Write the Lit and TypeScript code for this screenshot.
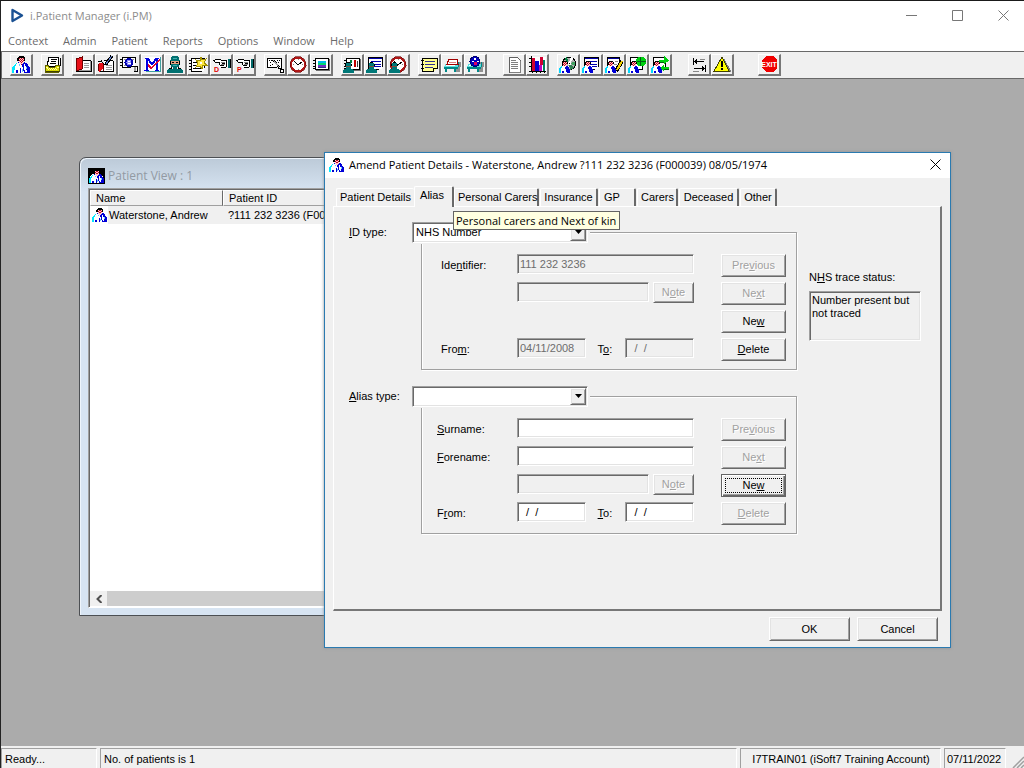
import { LitElement, html, svg, css, nothing } from 'lit';
import { customElement, property } from 'lit/decorators.js';

/* Filled pixel blocks: "x y w h|x y w h" */
const b = (fill: string, blocks: string) =>
  svg`<path fill=${fill} d=${blocks
    .split('|')
    .map((s) => {
      const [x, y, w, h] = s.split(' ');
      return `M${x} ${y}h${w}v${h}h-${w}z`;
    })
    .join('')}></path>`;

/* Polygon */
const p = (fill: string, points: string, stroke = 'none') =>
  svg`<polygon fill=${fill} stroke=${stroke} points=${points}></polygon>`;

/* Stroked path */
const l = (stroke: string, d: string, w = 1) =>
  svg`<path fill="none" stroke=${stroke} stroke-width=${w} d=${d}></path>`;

const doctor = svg`
  ${p('#fff', '4,8 8,7 10,9 12,7 16,8 19,13 19,18 1,18 1,13')}
  ${p('#00e8ff', '5,8 6,8 4,12 3,18 1,18 1,13')}
  ${p('#0000d8', '12,7 16,8 17,10 19,13 19,18 13,18 12,13 10,9')}
  ${p('#fff', '13,9 14,9 15,13 16,17 14,17 13,13')}
  ${b('#0000d8', '5 15 2 3|9 13 1 5|7 7 2 1')}
  ${b('#6cf', '8 9 1 2|11 14 1 3|15 12 1 2')}
  ${b('#000', '8 1 5 1|7 2 7 1|6 3 2 3|13 3 1 3')}
  ${b('#ffc8c8', '8 3 5 5|9 8 3 1')}
  ${b('#c00020', '8 3 1 1|10 3 1 1|12 3 1 1|9 4 1 1|11 4 1 1|8 5 1 1|10 5 1 1|12 5 1 1|9 6 1 1|11 6 1 1|10 7 1 1|10 9 1 1')}`;

const miniDoctor = svg`
  ${p('#fff', '3,11 11,11 12,18 2,18')}
  ${p('#00d8ff', '3,11 4,11 3,15 3,18 1,18 1,14')}
  ${p('#0000d8', '8,11 10,11 12,15 12,18 9,18 7,13')}
  ${b('#0000d8', '4 16 2 2')}
  ${b('#000', '5 6 4 1|4 7 1 3|9 7 1 2')}
  ${b('#ffc8c8', '5 7 4 4')}
  ${b('#c00020', '5 7 1 1|7 7 1 1|6 8 1 1|8 8 1 1|5 9 1 1|7 9 1 1|6 10 1 1')}`;

const miniSurgeon = svg`
  ${b('#007878', '4 8 5 2|3 10 7 1|4 12 5 2|2 14 9 1|1 15 11 3')}
  ${b('#805040', '4 11 5 1')}
  ${b('#000', '5 7 3 1|3 9 1 2|9 9 1 2')}`;

const clock = svg`
  <circle cx="10" cy="9.5" r="7" fill="#fff" stroke="#b01818" stroke-width="2"></circle>
  <circle cx="10" cy="9.5" r="8" fill="none" stroke="#600" stroke-width=".6"></circle>
  ${l('#000', 'M6 6L10 10L14 7')}
  ${b('#888', '10 4 1 1|10 14 1 1|5 9 1 1|14 9 1 1')}`;

const screen = svg`
  ${b('#000', '4 3 14 1|17 3 1 12|4 14 14 1|4 3 1 12')}${b('#fff', '5 4 12 10')}${b('#707070', '18 4 1 12|5 15 14 1')}
  ${b('#000', '2 5 2 1|2 8 2 1|2 11 2 1|2 13 2 1')}`;

const bed = svg`
  ${p('#909090', '15,7 19,7 18,17 12,17')}
  ${p('#60e0e0', '3,9 17,9 16,13 2,13')}
  ${b('#008888', '2 12 14 2|3 14 2 3|12 14 2 3|16 7 1 5')}
  ${b('#fff', '4 10 9 1')}`;

const card = svg`${b('#000', '3 2 15 1|3 2 1 13|17 2 1 10|3 14 11 1')}${b('#fff', '4 3 13 11')}${b('#0000b0', '4 3 13 1|6 6 10 1|6 9 10 1|8 11 8 1')}`;

const hand = svg`
  ${b('#fff', '3 5 6 2|8 5 8 7')}
  ${b('#000', '4 4 6 1|2 5 2 1|3 6 1 1|4 7 5 1|10 5 5 1|8 8 1 2|9 10 1 1|10 12 5 1|11 8 3 1|10 10 3 1|15 5 1 7')}
  ${b('#808080', '10 7 4 1|10 9 4 1')}
  ${b('#fff', '16 5 1 7')}${b('#006868', '17 4 2 9')}${b('#000', '19 4 1 9')}`;

const book = svg`
  ${b('#000', '9 5 9 1|18 6 1 11|3 16 16 1')}${b('#fff', '9 6 8 10')}
  ${b('#999', '11 8 5 1|11 10 5 1|11 12 5 1|17 6 1 10|5 15 12 1')}
  ${p('#e81018', '3,4 9,2 9,14 3,16')}${l('#700000', 'M3 4L9 2V14L3 16Z')}`;

const icons: Record<string, unknown> = {
  doctor,
  print: svg`
    ${p('#fff', '7,2 17,2 16,11 5,11', '#000')}
    ${b('#000', '9 4 6 1|9 6 5 1|8 8 6 1|18 3 1 8')}
    ${p('#d8d800', '3,10 6,10 7,12 13,12 14,10 18,10 17,17 3,17', '#606000')}
    ${b('#ffffa0', '4 12 2 1|15 12 2 1|5 13 1 1|7 13 1 1|9 13 1 1|11 13 1 1|13 13 1 1|6 14 1 1|8 14 1 1|10 14 1 1|12 14 1 1|14 14 1 1')}
    ${b('#404000', '4 16 13 1')}`,
  book,
  bookPen: svg`
    ${b('#000', '8 5 9 1|17 6 1 11|3 16 15 1')}${b('#fff', '8 6 9 10')}
    ${b('#999', '10 10 6 1|10 12 6 1|10 14 6 1')}
    ${p('#e81018', '2,9 7,7 7,14 3,17')}${b('#700000', '2 9 1 7|7 8 1 8')}
    ${b('#000', '2 6 4 1|5 5 1 2')}
    ${l('#000', 'M16 1L10 9', 3)}${l('#6080d0', 'M16 1L10 9')}${l('#000', 'M6 7L9 10L12 9')}`,
  find: svg`
    ${b('#000', '3 2 14 1|3 2 1 10|16 2 1 6|1 4 3 1|1 7 3 1|1 10 3 1|3 12 9 1')}
    ${b('#fff', '4 3 12 9')}${b('#888', '5 4 3 1|13 4 2 1|5 10 3 1')}
    <circle cx="10" cy="7.5" r="3.5" fill="#8a8aff" stroke="#0000b0" stroke-width="2"></circle>
    ${b('#fff', '9 6 2 1|9 8 3 1')}${l('#000', 'M12 11H18V16H15', 1)}${b('#999', '15 12 2 4')}`,
  chartM: svg`
    ${b('#fff', '3 2 15 14')}${b('#40a0a0', '18 2 1 15|4 16 15 1')}
    ${b('#0000e0', '4 3 2 13|14 3 2 13|2 15 5 1|13 15 4 1|3 3 3 1|14 3 3 1')}${l('#0000e0', 'M5 3L10 9L15 3', 2)}
    ${l('#e00030', 'M6 9L9 13L18 4', 1)}${l('#e00030', 'M6 10L9 14L18 5', 1)}`,
  surgeon: svg`
    ${b('#007070', '7 1 6 1|6 2 8 4|5 5 10 1|6 9 8 3|8 12 4 2|3 14 14 1|2 15 16 3')}
    ${b('#e0a080', '6 6 8 3')}${b('#000', '7 7 2 1|11 7 2 1|5 6 1 4|14 6 1 4|6 12 1 1|13 12 1 1|4 13 3 1|13 13 3 1')}
    ${b('#40b0b0', '8 3 4 1|8 10 4 1')}`,
  star: svg`
    ${b('#000', '3 3 14 1|3 3 1 13|16 3 1 10|3 16 11 1')}${b('#fff', '4 4 12 12')}${b('#000', '1 5 3 1|1 8 3 1|1 11 3 1|1 14 3 1|5 7 4 1|5 10 4 1|5 13 8 1')}
    ${p('#ffe840', '13,2 14,5 18,4 16,8 19,10 15,10 14,14 12,11 8,12 10,8 8,5 12,6', '#a09000')}${b('#fff', '12 7 2 2')}`,
  handD: svg`${hand}<text x="3" y="17" class="tag">D</text>`,
  handP: svg`${hand}<text x="3" y="17" class="tag">P</text>`,
  mail: svg`
    ${b('#000', '2 3 15 1|2 3 1 10|16 3 1 9|2 12 10 1')}${b('#fff', '3 4 13 8')}${b('#000', '4 5 1 1|6 5 1 1|5 7 1 1|12 5 1 1|14 5 1 1|5 10 1 1|7 9 1 1|13 7 1 1')}
    ${l('#000', 'M8 5L16 14', 2)}${l('#aaa', 'M8 5L14 12')}${b('#000', '13 12 4 2|15 14 4 4')}${b('#fff', '14 12 2 1|16 15 2 2')}`,
  clock,
  monitor: svg`${screen}${b('#00b8e8', '7 6 8 2')}${b('#00d870', '7 8 8 2')}${b('#7030c0', '7 10 8 2')}${b('#303080', '7 12 8 1')}`,
  monitorUser: svg`${screen}${b('#008040', '8 5 2 3')}${b('#c00000', '12 5 2 7')}${b('#404040', '15 6 1 6')}${miniSurgeon}`,
  cardUser: svg`${card}${miniSurgeon}`,
  clockUser: svg`${clock}${miniSurgeon}`,
  note: svg`${b('#000', '3 3 16 1|3 3 1 14|18 3 1 11|3 16 12 1')}${p('#ffff90', '4,4 18,4 18,13 15,16 4,16')}${b('#000', '2 5 3 1|2 9 3 1|2 13 3 1')}${b('#303090', '6 6 10 1|6 9 10 1|6 12 8 1')}${l('#000', 'M14 16V13H18')}`,
  bed: svg`${bed}${p('#fff', '7,4 15,4 16,9 5,9', '#a00000')}${b('#e08080', '7 7 7 1')}`,
  bedBall: svg`${bed}<circle cx="10" cy="6.5" r="5" fill="#0000c0" stroke="#000070"></circle>${b('#fff', '9 3 2 2|7 6 2 1|12 6 2 1')}${b('#e00060', '9 7 3 3')}`,
  page: svg`${p('#fff', '5,2 13,2 16,5 16,17 5,17', '#606060')}${b('#808080', '7 5 5 1|7 7 7 1|7 9 7 1|7 11 7 1|7 13 7 1|16 6 1 12|6 17 11 1')}`,
  bars: svg`
    ${b('#fff', '4 2 15 14')}${b('#000', '4 1 1 16|2 16 17 1|2 3 2 1|2 7 2 1|2 11 2 1')}
    ${b('#d00030', '5 3 3 13|13 2 3 8')}${b('#0000d0', '8 6 4 10')}${b('#c000c0', '12 10 3 6')}${b('#008060', '16 5 2 11')}
    ${b('#000', '5 17 1 1|9 17 1 1|13 17 1 1|17 17 1 1')}`,
  discDoctor: svg`
    <circle cx="11" cy="8.5" r="6.5" fill="#b0b0b0" stroke="#000"></circle>
    ${p('#008040', '11,8 6,4 9,2')}${p('#fff', '11,8 13,2 16,4')}${p('#40a060', '11,8 17,7 17,11')}${p('#308050', '11,8 12,15 16,13')}${b('#fff', '10 7 3 3')}${b('#000', '11 8 1 1')}${miniDoctor}`,
  cardDoctor: svg`${card}${miniDoctor}`,
  cardPen: svg`${b('#000', '3 2 13 12')}${b('#fff', '4 4 11 9')}${b('#0000a0', '4 3 11 1')}${b('#888', '6 6 3 1|11 6 3 1|10 9 3 1')}${l('#000', 'M18 6L12 16', 4)}${l('#f0d000', 'M18 6L13 15', 2)}${miniDoctor}`,
  globeDoctor: svg`${b('#000', '3 2 13 13')}${b('#fff', '4 3 11 11')}<circle cx="14" cy="6.5" r="5" fill="#00d010"></circle>${b('#006010', '10 6 9 1|13 2 1 9')}${miniDoctor}`,
  swapDoctor: svg`${b('#000', '3 2 13 13')}${b('#fff', '4 3 11 11')}${b('#0000a0', '6 6 4 1')}${p('#00d010', '9,5 14,5 14,1 19,6 14,9 14,7 9,7')}${p('#00d010', '19,12 14,12 14,9 10,13 14,17 14,14 19,14')}${b('#006010', '9 7 5 1|14 14 5 1')}${miniDoctor}`,
  tabs: svg`${b('#000', '4 3 1 7|5 6 10 1|6 5 1 3|7 4 1 5|16 10 1 7|5 13 11 1|14 12 1 3|13 11 1 5')}${b('#888', '11 4 5 1|4 16 6 1')}`,
  warn: svg`${p('#808080', '12,3 19,16 18,17 6,17')}${p('#ffff00', '10,2 17,16 2,16', '#404000')}${b('#000', '9 6 2 6|9 13 2 2')}`,
  exit: svg`${p('#f00000', '7,1 14,1 18,5 18,13 14,17 7,17 3,13 3,5')}<text x="10" y="12" class="exit" text-anchor="middle">EXIT</text>`,
};

const toolbar: [string, string][][] = [
  [['doctor', 'Patient']],
  [['print', 'Print']],
  [['book', 'Referral'], ['bookPen', 'Amend referral'], ['find', 'Find'], ['chartM', 'Maintain'], ['surgeon', 'Theatre'], ['star', 'New'], ['handD', 'Discharge'], ['handP', 'Pending']],
  [['mail', 'Letters'], ['clock', 'Appointments'], ['monitor', 'Clinics']],
  [['monitorUser', 'Staff clinics'], ['cardUser', 'Staff card'], ['clockUser', 'Staff time']],
  [['note', 'Notes'], ['bed', 'Beds'], ['bedBall', 'Ward']],
  [['page', 'Document'], ['bars', 'Statistics']],
  [['discDoctor', 'Trace'], ['cardDoctor', 'Patient card'], ['cardPen', 'Edit card'], ['globeDoctor', 'Demographics'], ['swapDoctor', 'Synchronise']],
  [['tabs', 'Switch'], ['warn', 'Alerts']],
  [['exit', 'Exit']],
];

@customElement('pm-icon')
export class PmIcon extends LitElement {
  @property() name = 'doctor';
  static styles = css`
    :host { display: block; width: 20px; height: 19px; flex: none; }
    svg { display: block; width: 100%; height: 100%; shape-rendering: crispEdges; }
    .tag { font: bold 7px 'Liberation Sans', Arial, sans-serif; fill: #e00000; }
    .exit { font: bold 7px 'Liberation Sans', Arial, sans-serif; fill: #fff; }
  `;
  render() {
    return html`<svg viewBox="0 0 20 19" aria-hidden="true">${icons[this.name] ?? nothing}</svg>`;
  }
}

/* Caption with an underlined access key: "Pre_vious" */
const key = (text: string) => {
  const i = text.indexOf('_');
  return i < 0 ? text : html`${text.slice(0, i)}<u>${text[i + 1]}</u>${text.slice(i + 2)}`;
};

@customElement('app-root')
export class AppRoot extends LitElement {
  static styles = css`
    :host {
      display: flex; flex-direction: column; height: 100vh; box-sizing: border-box; overflow: hidden;
      border-top: 1px solid #1a1a1a; border-left: 1px solid #222; background: #f0f0f0; color: #000;
      font: 11px/13px 'Liberation Sans', Arial, sans-serif;
    }
    * { box-sizing: border-box; }
    button, input, select, textarea { font: inherit; color: inherit; margin: 0; border-radius: 0; }
    u { text-underline-offset: 1px; }
    .ui { font-family: 'Open Sans', 'Noto Sans', sans-serif; font-size: 11px; line-height: 16px; }

    .titlebar { display: flex; align-items: center; height: 29px; background: #fff; color: #8c8c8c; padding-left: 9px; gap: 5px; overflow: hidden; }
    .titlebar h1 { flex: 1; font-size: inherit; font-weight: 400; margin: 0; }
    .winbtns { display: flex; margin-right: -2px; }
    .winbtn { width: 46px; height: 29px; padding: 0; border: 0; background: none; display: grid; place-items: center; color: #777; }
    .menu { display: flex; background: #fff; height: 21px; color: #6b6b6b; padding-left: 7px; gap: 15px; }
    .menu a { color: inherit; text-decoration: none; line-height: 21px; }

    .toolbar { display: flex; gap: 8px; height: 28px; padding: 2px 8px; border: 1px solid #696969; border-width: 1px 0 1px 1px; background: #f0f0f0; }
    .tools { display: flex; }
    .tools.wide { margin-left: 8px; }
    .tools.last { margin-left: 16px; }
    .tool { width: 23px; height: 22px; padding: 0; background: #f0f0f0; border: solid; border-width: 1px 2px 2px 1px; border-color: #fff #777 #777 #fff; overflow: hidden; }

    .desk { position: relative; flex: 1; min-height: 0; background: #ababab; overflow: hidden; }

    .child { position: absolute; left: 78px; top: 78px; width: 500px; height: 459px; display: flex; flex-direction: column;
      border: 1px solid #4c4f53; border-radius: 7px 7px 0 0; padding: 0 8px 7px; box-shadow: inset 1px 1px #eef5fc;
      background: linear-gradient(#bccad8, #d7e4f2 34px); }
    .childcap { display: flex; align-items: center; gap: 3px; height: 30px; padding-top: 6px; color: #929aa3; font-size: 12px; }
    .sq { background: #000; width: 17px; height: 16px; }
    .sq pm-icon, .cell pm-icon { width: 17px; height: 16px; }
    .list { flex: 1; display: flex; flex-direction: column; background: #fff; border: 1px solid; border-color: #a0a0a0 #fff #fff #a0a0a0; box-shadow: inset 1px 1px #696969; padding: 1px 0 1px 1px; }
    table { border-collapse: separate; border-spacing: 0; table-layout: fixed; width: 100%; text-align: left; }
    th, td { font-weight: 400; padding: 0 0 0 5px; white-space: nowrap; }
    th { height: 16px; background: #f0f0f0; border: 1px solid; border-color: #fff #696969 #a0a0a0 #fff; }
    th:first-child { width: 133px; }
    td { background: #f0f0f0; height: 18px; }
    td:first-child { padding: 0; background: linear-gradient(90deg, #fff 18px, #f0f0f0 18px); }
    .cell { display: flex; align-items: center; height: 17px; gap: 1px; padding-left: 1px; }
    .grow { flex: 1; }
    .hscroll { display: flex; height: 15px; background: #cdcdcd; }
    .hscroll button { width: 17px; border: 0; padding: 0; background: #f0f0f0; display: grid; place-items: center; }

    .dialog { position: absolute; left: 323px; top: 73px; width: 627px; height: 496px; display: flex; flex-direction: column;
      background: #f0f0f0; border: 1px solid #2a7ab0; box-shadow: 0 0 3px #8f9499; }
    .cap { display: flex; align-items: center; height: 25px; background: #fff; padding: 0 0 2px 3px; gap: 4px; }
    .cap pm-icon { width: 17px; height: 16px; }
    .cap h2 { flex: 1; margin: 0; font-size: inherit; font-weight: 400; }
    .cap button { width: 30px; height: 23px; border: 0; background: none; padding: 0; display: grid; place-items: center; }
    .body { flex: 1; display: flex; flex-direction: column; padding: 8px 8px 6px; }
    .tabs { display: flex; align-items: flex-end; padding-left: 3px; height: 20px; }
    .tab { height: 18px; padding: 0 3px; margin-right: 1px; background: none; border: solid; border-width: 1px 2px 0 1px; border-color: #fff #696969 #fff #fff; border-radius: 2px 2px 0 0; white-space: nowrap; text-align: center; }
    .tab.on { height: 21px; margin-bottom: -1px; margin-right: 0; padding: 0 6px 3px 3px; background: #f0f0f0; position: relative; }
    .tab.before { border-right: 0; margin-right: 0; }
    .tab.start { text-align: left; padding-left: 4px; }
    .panel { flex: 1; display: flex; gap: 12px; align-items: flex-start; padding: 15px 0 0 15px; border: solid; border-width: 1px 2px 2px 1px; border-color: #fff #777 #777 #fff; }
    .sections { display: grid; gap: 16px; width: 448px; }
    .head { display: flex; align-items: center; height: 21px; margin-bottom: -11px; position: relative; }
    .head label { width: 63px; }
    .combo { position: relative; width: 178px; height: 22px; padding-right: 2px; background: #f0f0f0; }
    .combo select { display: block; width: 100%; height: 21px; appearance: none; padding: 0 3px; background: #fff; outline: none; }
    .combo span { position: absolute; right: 4px; top: 2px; width: 16px; height: 17px; display: grid; place-items: center; pointer-events: none; background: #f0f0f0; }
    .sunk { border: 1px solid; border-color: #a0a0a0 #fff #fff #a0a0a0; box-shadow: inset 1px 1px #696969, inset -1px -1px #e3e3e3; }
    .raised { background: #f0f0f0; border: 1px solid; border-color: #fff #696969 #696969 #fff; box-shadow: inset 1px 1px #e3e3e3, inset -1px -1px #a0a0a0; padding: 0; }
    .group { display: flex; justify-content: space-between; margin-left: 72px; padding: 21px 10px 8px 15px; border: 1px solid #a0a0a0; box-shadow: 1px 1px #fff, inset 1px 1px #fff; }
    .form { display: grid; grid-template-columns: 80px 177px; grid-auto-rows: 23px; row-gap: 5px; }
    .form > label { line-height: 23px; }
    .inset { padding-left: 4px; }
    .line { display: flex; }
    .line label { line-height: 23px; width: 40px; padding-left: 12px; }
    input { height: 20px; width: 100%; padding: 0 2px; background: #fff; outline: none; min-width: 0; }
    input:disabled { background: #f0f0f0; color: #6d6d6d; }
    .line .date { width: 69px; }
    .line .memo { width: 132px; margin-right: 4px; }
    .note { width: 41px; height: 21px; }
    .acts { display: grid; grid-auto-rows: 23px; gap: 5px; width: 65px; }
    button:disabled { color: #a0a0a0; text-shadow: 1px 1px #fff; }
    .raised.focus { border-color: #646464; box-shadow: inset 1px 1px #fff, inset -1px -1px #696969, inset -2px -2px #a0a0a0; outline: 1px dotted #000; outline-offset: -5px; }
    .status { display: grid; gap: 7px; width: 113px; padding-top: 49px; }
    textarea { width: 112px; height: 50px; resize: none; background: #f0f0f0; padding: 2px; outline: none; overflow: hidden; }
    .foot { display: flex; justify-content: flex-end; gap: 7px; padding: 6px 4px 0 0; }
    .foot button { width: 81px; height: 24px; }
    .tip { position: absolute; left: 452px; top: 132px; height: 19px; padding: 0 3px 0 2px; background: #ffffe1; border: 1px solid #646464; line-height: 17px; white-space: nowrap; }

    .statusbar { display: flex; gap: 3px; height: 22px; padding: 2px 0 0; }
    .statusbar div { border: 1px solid; border-color: #a0a0a0 #fff #fff #a0a0a0; padding: 4px 2px 0 3px; height: 24px; white-space: nowrap; }
    .s1 { width: 96px; }
    .s2 { flex: 1; }
    .statusbar .s3 { width: 201px; text-align: center; }
    .statusbar .s4 { width: 62px; padding-left: 2px; }
    .grip { width: 15px; }
  `;

  private input(id: string, cls: string, value: string, off: boolean, label?: string) {
    return html`<input id=${id} class="sunk ${cls}" .value=${value} ?disabled=${off} aria-label=${label ?? nothing} />`;
  }

  private actions(items: [string, boolean][], focus = '') {
    return html`<div class="acts">
      ${items.map(([t, on]) => html`<button class="raised ${t === focus ? 'focus' : ''}" ?disabled=${!on}>${key(t)}</button>`)}
    </div>`;
  }

  private arrow = html`<span class="raised"><svg width="7" height="4" viewBox="0 0 7 4"><path d="M0 0h7L3.500 4z"></path></svg></span>`;

  render() {
    return html`
      <header class="titlebar ui">
        <svg width="15" height="15" viewBox="0 0 15 15"><path d="M2.500 2L12 7.500L2.500 13Z" fill="none" stroke="#1b5193" stroke-width="2.400" stroke-linejoin="round"></path></svg>
        <h1>i.Patient Manager (i.PM)</h1>
        <div class="winbtns">
          <button class="winbtn" aria-label="Minimize"><svg width="11" height="11"><path d="M0 5.500H11" stroke="currentColor"></path></svg></button>
          <button class="winbtn" aria-label="Maximize"><svg width="11" height="11"><path d="M.5.500H10.500V10.500H.5Z" fill="none" stroke="currentColor"></path></svg></button>
          <button class="winbtn" aria-label="Close"><svg width="11" height="11"><path d="M.5.500L10.500 10.500M10.500.5L.5 10.500" stroke="currentColor"></path></svg></button>
        </div>
      </header>
      <nav class="menu ui">
        ${['Context', 'Admin', 'Patient', 'Reports', 'Options', 'Window', 'Help'].map((m) => html`<a href="#">${m}</a>`)}
      </nav>
      <div class="toolbar" role="toolbar">
        ${toolbar.map((g, i) => html`<div class="tools ${i === 6 || i === 8 ? 'wide' : i === 9 ? 'last' : ''}">
          ${g.map(([n, label]) => html`<button class="tool" aria-label=${label}><pm-icon name=${n}></pm-icon></button>`)}
        </div>`)}
      </div>

      <main class="desk">
        <section class="child">
          <div class="childcap ui"><span class="sq"><pm-icon></pm-icon></span>Patient View : 1</div>
          <div class="list">
            <table>
              <thead><tr><th>Name</th><th>Patient ID</th></tr></thead>
              <tbody><tr><td><div class="cell"><pm-icon></pm-icon>Waterstone, Andrew</div></td><td>?111 232 3236 (F000039)</td></tr></tbody>
            </table>
            <div class="grow"></div>
            <div class="hscroll"><button aria-label="Scroll left"><svg width="6" height="8"><path d="M5.500 0L1.500 4L5.500 8" fill="none" stroke="#505050" stroke-width="2"></path></svg></button></div>
          </div>
        </section>

        <section class="dialog" role="dialog" aria-labelledby="dlg">
          <div class="cap ui">
            <pm-icon></pm-icon>
            <h2 id="dlg">Amend Patient Details - Waterstone, Andrew ?111 232 3236 (F000039) 08/05/1974</h2>
            <button aria-label="Close"><svg width="11" height="11"><path d="M.5.500L10.500 10.500M10.500.5L.5 10.500" stroke="#000"></path></svg></button>
          </div>
          <div class="body">
            <div class="tabs" role="tablist">
              ${['Patient Details', 'Alias', 'Personal Carers', 'Insurance', 'GP', 'Carers', 'Deceased', 'Other'].map(
                (t, i) => html`<button role="tab" class="tab ${i === 1 ? 'on' : i === 0 ? 'before' : i === 4 ? 'start' : ''}" style="width:${[78, 40, 85, 58, 37, 41, 60, 37][i]}px">${t}</button>`
              )}
            </div>
            <div class="panel">
              <div class="sections">
                <div>
                  <div class="head">
                    <label for="idtype">${key('_ID type:')}</label>
                    <div class="combo"><select id="idtype" class="sunk"><option>NHS Number</option></select>${this.arrow}</div>
                  </div>
                  <div class="group">
                    <div class="form">
                      <label class="inset" for="ident">${key('Ide_ntifier:')}</label>
                      ${this.input('ident', '', '111 232 3236', true)}
                      <span></span>
                      <div class="line">${this.input('memo1', 'memo', '', true, 'Note text')}<button class="raised note" disabled>${key('N_ote')}</button></div>
                      <span></span><span></span>
                      <label class="inset" for="from1">${key('Fro_m:')}</label>
                      <div class="line">${this.input('from1', 'date', '04/11/2008', true)}<label for="to1">${key('T_o:')}</label>${this.input('to1', 'date', '  /  /', true)}</div>
                    </div>
                    ${this.actions([['Pre_vious', false], ['Ne_xt', false], ['Ne_w', true], ['_Delete', true]])}
                  </div>
                </div>
                <div>
                  <div class="head">
                    <label for="aliastype">${key('_Alias type:')}</label>
                    <div class="combo"><select id="aliastype" class="sunk"><option></option></select>${this.arrow}</div>
                  </div>
                  <div class="group">
                    <div class="form">
                      <label for="sur">${key('_Surname:')}</label>
                      ${this.input('sur', '', '', false)}
                      <label for="fore">${key('_Forename:')}</label>
                      ${this.input('fore', '', '', false)}
                      <span></span>
                      <div class="line">${this.input('memo2', 'memo', '', true, 'Note text')}<button class="raised note" disabled>${key('N_ote')}</button></div>
                      <label for="from2">${key('F_rom:')}</label>
                      <div class="line">${this.input('from2', 'date', '  /  /', false)}<label for="to2">${key('_To:')}</label>${this.input('to2', 'date', '  /  /', false)}</div>
                    </div>
                    ${this.actions([['Pre_vious', false], ['Ne_xt', false], ['Ne_w', true], ['_Delete', false]], 'Ne_w')}
                  </div>
                </div>
              </div>
              <div class="status">
                <label for="trace">${key('N_HS trace status:')}</label>
                <textarea id="trace" class="sunk" readonly .value=${'Number present but not traced'}></textarea>
              </div>
            </div>
            <div class="foot"><button class="raised">OK</button><button class="raised">Cancel</button></div>
          </div>
        </section>
        <div class="tip ui" role="tooltip">Personal carers and Next of kin</div>
      </main>

      <footer class="statusbar">
        <div class="s1">Ready...</div><div class="s2">No. of patients is 1</div>
        <div class="s3">I7TRAIN01 (iSoft7 Training Account)</div><div class="s4">07/11/2022</div>
        <svg class="grip" width="15" height="20" viewBox="0 0 15 20"><path d="M4 20L15 9M8 20L15 13M12 20L15 17" stroke="#a0a0a0" stroke-width="1.500"></path></svg>
      </footer>
    `;
  }
}
